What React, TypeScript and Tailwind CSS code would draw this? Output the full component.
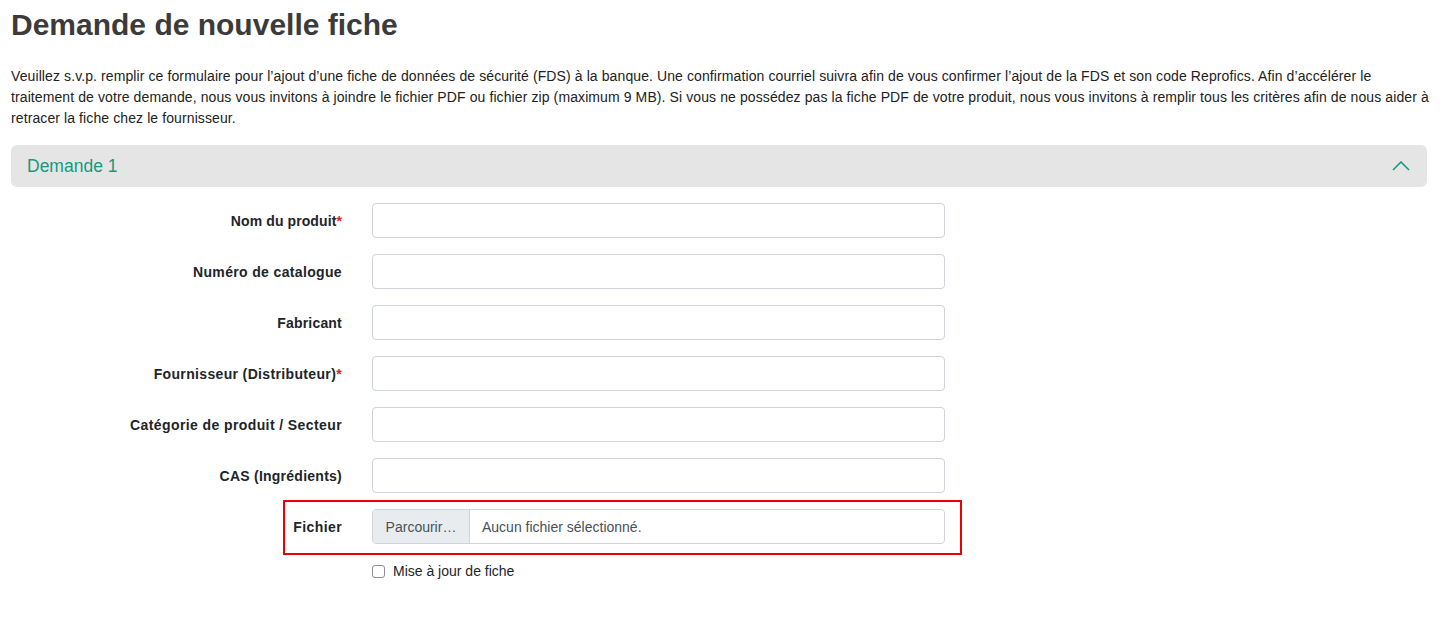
import React from "react";

const rows: { label: string; req?: boolean; ls: string }[] = [
  { label: "Nom du produit", req: true, ls: "tracking-[0.1px]" },
  { label: "Numéro de catalogue", ls: "tracking-[0.35px]" },
  { label: "Fabricant", ls: "tracking-[0.2px]" },
  { label: "Fournisseur (Distributeur)", req: true, ls: "tracking-[0.35px]" },
  { label: "Catégorie de produit / Secteur", ls: "tracking-[0.4px]" },
  { label: "CAS (Ingrédients)", ls: "tracking-[0.25px]" },
];

export default function App() {
  return (
    <div
      className="min-h-[617px] bg-white pl-[11px] pr-[11px] text-[#212529]"
      style={{ fontFamily: '"Liberation Sans", Arial, sans-serif' }}
    >
      <h1 className="pt-[7px] text-[30px] font-bold leading-[36px] text-[#3b3b3b]">
        Demande de nouvelle fiche
      </h1>
      <p className="mt-[23px] whitespace-nowrap text-[14px] leading-[21px] tracking-[0.1px] text-[#222]">
        Veuillez s.v.p. remplir ce formulaire pour l’ajout d’une fiche de données de sécurité (FDS) à la banque. Une
        confirmation courriel suivra afin de vous confirmer l’ajout de la FDS et son code Reprofics. Afin d’accélérer le
        <br />
        traitement de votre demande, nous vous invitons à joindre le fichier PDF ou fichier zip (maximum 9 MB). Si vous ne
        possédez pas la fiche PDF de votre produit, nous vous invitons à remplir tous les critères afin de nous aider à
        <br />
        retracer la fiche chez le fournisseur.
      </p>
      <div className="mt-[16px] mr-[5px] flex h-[42px] items-center justify-between rounded-[6px] bg-[#e5e5e5] pl-[16px] pr-[16px]">
        <span className="text-[17.5px] text-[#139a7f]">Demande 1</span>
        <svg width="18" height="10" viewBox="0 0 18 10" className="mr-[1px]">
          <polyline points="1,9 9,1 17,9" fill="none" stroke="#139a7f" strokeWidth="1.6" />
        </svg>
      </div>
      <div className="mt-[16px] flex flex-col gap-[16px]">
        {rows.map((r) => (
          <div key={r.label} className="flex items-center">
            <label className={`w-[331px] pt-[2px] text-right text-[14px] font-bold text-[#212529] ${r.ls}`}>
              {r.label}
              {r.req && <span className="text-[#e02020]">*</span>}
            </label>
            <div className="ml-[30px] h-[35px] w-[573px] rounded-[4px] border border-[#ced4da] bg-white" />
          </div>
        ))}
        <div className="relative flex items-center">
          <span className="pointer-events-none absolute left-[272px] top-[-9px] h-[55px] w-[679px] border-2 border-[#ee0000]" />
          <label className="w-[331px] pt-[2px] text-right text-[14px] font-bold tracking-[0.4px] text-[#212529]">
            Fichier
          </label>
          <div className="ml-[30px] flex h-[35px] w-[573px] overflow-hidden rounded-[4px] border border-[#ced4da] bg-white text-[14px]">
            <div className="flex w-[97px] items-center justify-center border-r border-[#ced4da] bg-[#e9ecef] pt-[1px] text-[#495057]">
              Parcourir…
            </div>
            <div className="flex items-center pl-[12px] pt-[1px] text-[#495057]">Aucun fichier sélectionné.</div>
          </div>
        </div>
      </div>
      <div className="mt-[17px] flex items-center pl-[361px] text-[14px] leading-[21px]">
        <span className="h-[13px] w-[13px] rounded-[3px] border border-[#8f8f8f] bg-white" />
        <span className="ml-[8px] text-[#212529]">Mise à jour de fiche</span>
      </div>
    </div>
  );
}
